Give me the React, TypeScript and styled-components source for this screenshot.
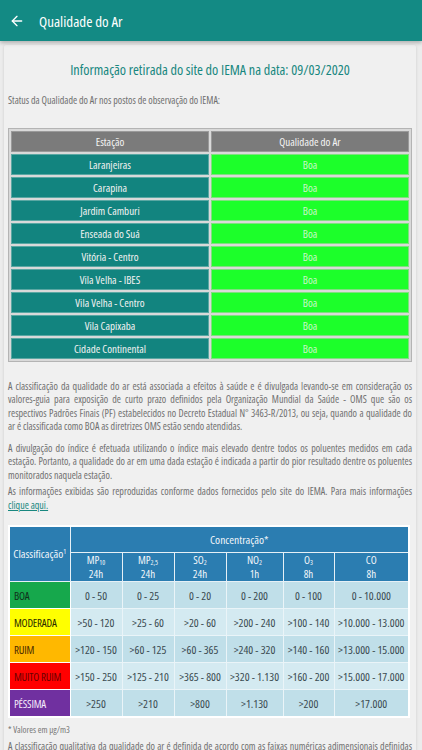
import * as React from 'react';
import styled, { createGlobalStyle } from 'styled-components';
import { ArrowLeft } from 'lucide-react';

const GlobalStyle = createGlobalStyle`
    body {
        margin: 0;
        background: #ececec;
        font-family: "Open Sans", sans-serif;
        font-stretch: 75%;
    }
`;

const AppBar = styled.header`
    height: 41px;
    background-color: #138a84;
    display: flex;
    align-items: center;
    padding-left: 9px;
    color: #fff;
    box-shadow: 0 2px 4px rgba(0, 0, 0, 0.25);
    position: relative;
    z-index: 1;
`;

const BackButton = styled.span`
    display: flex;
    align-items: center;
    width: 30px;
`;

const AppTitle = styled.h1`
    margin: 0;
    font-size: 15px;
    font-weight: normal;
`;

const Card = styled.main`
    margin: 4px 6px 0 4px;
    padding: 15px 4px 10px 4px;
    background-color: #f0f0f0;
    box-shadow: 0 1px 3px rgba(0, 0, 0, 0.15);
    border-radius: 2px;
`;

const Title = styled.h2`
    margin: 0;
    text-align: center;
    font-size: 14.2px;
    line-height: 20px;
    font-weight: normal;
    color: #17877f;
`;

const Text = styled.p<{ $gap?: number }>`
    margin: 0 0 ${p => p.$gap ?? 0}px 0;
    font-size: 10px;
    line-height: 13.5px;
    color: #6f6f6f;
    text-align: justify;
`;

const StatusLine = styled(Text)`
    margin: 14px 0 20px 0;
    text-align: left;
`;

const Link = styled.a`
    color: #17877f;
    text-decoration: underline;
`;

const StationTable = styled.table`
    width: 100%;
    border: 1px solid #b4b4b4;
    border-spacing: 2px;
    background-color: #d9d9d9;
    margin-bottom: 18px;
    table-layout: fixed;
`;

const HeadCell = styled.th`
    height: 19px;
    padding: 0;
    background-color: #7b7b7b;
    border: 1px solid #9a9a9a;
    color: #f4f4f4;
    font-size: 11px;
    font-weight: normal;
`;

const StationCell = styled.td<{ $good?: boolean }>`
    height: 19px;
    padding: 0;
    text-align: center;
    font-size: 11px;
    border: 1px solid ${p => (p.$good ? '#7fe07f' : '#5aa7a3')};
    background-color: ${p => (p.$good ? '#1cff2a' : '#12847f')};
    color: ${p => (p.$good ? '#c6f7c6' : '#f2f2f2')};
`;

const ConcTable = styled.table`
    width: 400px;
    border-collapse: collapse;
    border: 2px solid #fff;
    margin: 13px 0 5px 0;
    table-layout: fixed;
    font-size: 11.5px;
`;

const ConcHead = styled.th<{ $h?: number }>`
    height: ${p => (p.$h ? `${p.$h}px` : 'auto')};
    background-color: #2b7db1;
    color: #f2f6fa;
    font-weight: normal;
    border: 1px solid #e6f0f6;
    padding: 0;
    line-height: 14px;
`;

const Pollutant = styled.span`
    display: block;
    font-size: 11px;
    line-height: 14px;
`;

const Sub = styled.sub`
    font-size: 7px;
    line-height: 0;
    vertical-align: -1px;
`;

const Sup = styled.sup`
    font-size: 7px;
    line-height: 0;
    vertical-align: 4px;
`;

const ClassCell = styled.td<{ $bg: string; $fg: string }>`
    height: 26px;
    padding: 0 0 0 4px;
    background-color: ${p => p.$bg};
    color: ${p => p.$fg};
    border: 1px solid #fff;
    font-size: 11px;
    letter-spacing: -0.2px;
`;

const ValueCell = styled.td<{ $alt?: boolean }>`
    padding: 0;
    text-align: center;
    color: #3a4a50;
    background-color: ${p => (p.$alt ? '#d4eaf1' : '#c0dfe9')};
    border: 1px solid #eaf4f8;
`;

const Note = styled.div`
    font-size: 9px;
    color: #777;
    margin-bottom: 4px;
`;

const stations = [
    'Laranjeiras',
    'Carapina',
    'Jardim Camburi',
    'Enseada do Suá',
    'Vitória - Centro',
    'Vila Velha - IBES',
    'Vila Velha - Centro',
    'Vila Capixaba',
    'Cidade Continental',
];

const pollutants: { name: string; sub?: string; period: string }[] = [
    { name: 'MP', sub: '10', period: '24h' },
    { name: 'MP', sub: '2,5', period: '24h' },
    { name: 'SO', sub: '2', period: '24h' },
    { name: 'NO', sub: '2', period: '1h' },
    { name: 'O', sub: '3', period: '8h' },
    { name: 'CO', period: '8h' },
];

const levels = [
    { name: 'BOA', bg: '#16a84c', fg: '#10301a', values: ['0 - 50', '0 - 25', '0 - 20', '0 - 200', '0 - 100', '0 - 10.000'] },
    { name: 'MODERADA', bg: '#ffff00', fg: '#2a2a00', values: ['>50 - 120', '>25 - 60', '>20 - 60', '>200 - 240', '>100 - 140', '>10.000 - 13.000'] },
    { name: 'RUIM', bg: '#ffb800', fg: '#4a2a00', values: ['>120 - 150', '>60 - 125', '>60 - 365', '>240 - 320', '>140 - 160', '>13.000 - 15.000'] },
    { name: 'MUITO RUIM', bg: '#ff0000', fg: '#6a0000', values: ['>150 - 250', '>125 - 210', '>365 - 800', '>320 - 1.130', '>160 - 200', '>15.000 - 17.000'] },
    { name: 'PÉSSIMA', bg: '#7030a0', fg: '#f4eafa', values: ['>250', '>210', '>800', '>1.130', '>200', '>17.000'] },
];

const colWidths = [61, 52, 52, 52, 57, 51, 75];

export default class App extends React.Component {
    render() {
        return (
            <>
                <GlobalStyle />
                <AppBar>
                    <BackButton>
                        <ArrowLeft size={16} strokeWidth={2} />
                    </BackButton>
                    <AppTitle>Qualidade do Ar</AppTitle>
                </AppBar>
                <Card>
                    <Title>Informação retirada do site do IEMA na data: 09/03/2020</Title>
                    <StatusLine>Status da Qualidade do Ar nos postos de observação do IEMA:</StatusLine>

                    <StationTable>
                        <thead>
                            <tr>
                                <HeadCell>Estação</HeadCell>
                                <HeadCell>Qualidade do Ar</HeadCell>
                            </tr>
                        </thead>
                        <tbody>
                            {stations.map(s => (
                                <tr key={s}>
                                    <StationCell>{s}</StationCell>
                                    <StationCell $good>Boa</StationCell>
                                </tr>
                            ))}
                        </tbody>
                    </StationTable>

                    <Text $gap={8}>
                        A classificação da qualidade do ar está associada a efeitos à saúde e é divulgada levando-se em consideração os
                        valores-guia para exposição de curto prazo definidos pela Organização Mundial da Saúde - OMS que são os
                        respectivos Padrões Finais (PF) estabelecidos no Decreto Estadual N° 3463-R/2013, ou seja, quando a qualidade do
                        ar é classificada como BOA as diretrizes OMS estão sendo atendidas.
                    </Text>
                    <Text $gap={3}>
                        A divulgação do índice é efetuada utilizando o índice mais elevado dentre todos os poluentes medidos em cada
                        estação. Portanto, a qualidade do ar em uma dada estação é indicada a partir do pior resultado dentre os poluentes
                        monitorados naquela estação.
                    </Text>
                    <Text>
                        As informações exibidas são reproduzidas conforme dados fornecidos pelo site do IEMA. Para mais informações{' '}
                        <Link href="#">clique aqui.</Link>
                    </Text>

                    <ConcTable>
                        <colgroup>
                            {colWidths.map((w, i) => (
                                <col key={i} style={{ width: w }} />
                            ))}
                        </colgroup>
                        <thead>
                            <tr>
                                <ConcHead rowSpan={2}>
                                    Classificação<Sup>1</Sup>
                                </ConcHead>
                                <ConcHead colSpan={6} $h={25}>Concentração*</ConcHead>
                            </tr>
                            <tr>
                                {pollutants.map((p, i) => (
                                    <ConcHead key={i} $h={i === 0 ? 28 : undefined}>
                                        <Pollutant>
                                            {p.name}
                                            {p.sub && <Sub>{p.sub}</Sub>}
                                        </Pollutant>
                                        <Pollutant>{p.period}</Pollutant>
                                    </ConcHead>
                                ))}
                            </tr>
                        </thead>
                        <tbody>
                            {levels.map((l, i) => (
                                <tr key={l.name}>
                                    <ClassCell $bg={l.bg} $fg={l.fg}>{l.name}</ClassCell>
                                    {l.values.map((v, j) => (
                                        <ValueCell key={j} $alt={i % 2 === 1}>{v}</ValueCell>
                                    ))}
                                </tr>
                            ))}
                        </tbody>
                    </ConcTable>

                    <Note>* Valores em µg/m3</Note>
                    <Text>
                        A classificação qualitativa da qualidade do ar é definida de acordo com as faixas numéricas adimensionais definidas para o
                        IQA, e tem como parâmetros de comparação os valores de referência das concentrações apresentados acima. Quando o índice
                        atinge valores elevados, a população deve ser alertada.
                    </Text>
                </Card>
            </>
        );
    }
}
